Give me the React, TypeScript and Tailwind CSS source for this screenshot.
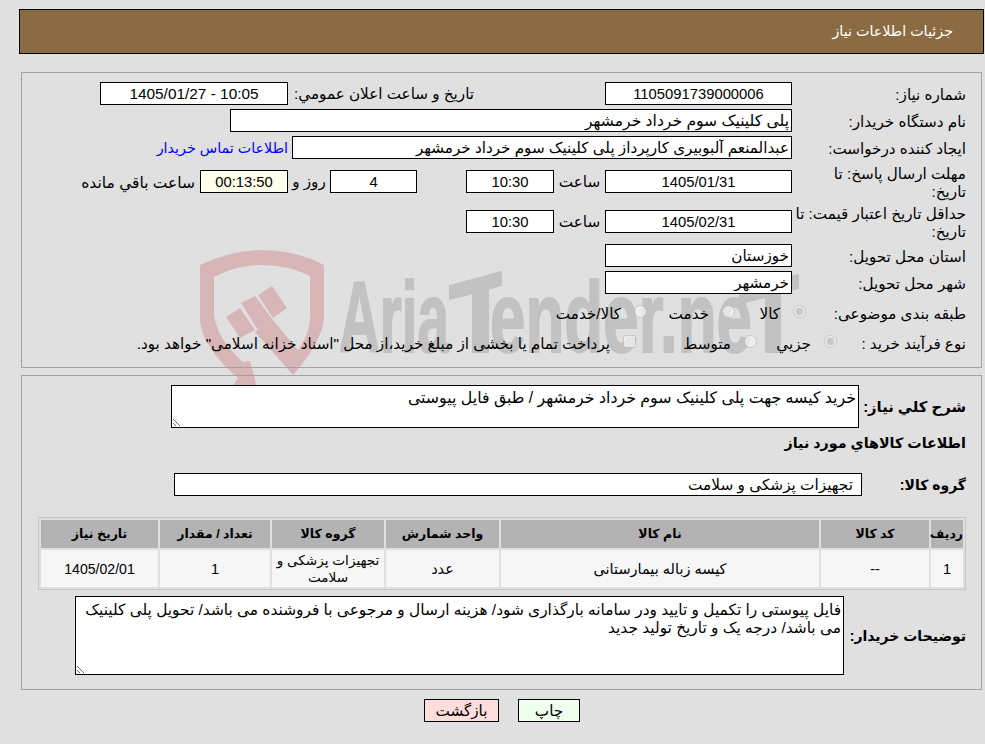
const field = 'h-[23px] border border-black px-[2px] outline-none';
const white = `${field} bg-white`;
const numeric = `${white} text-center text-[14.8px]`;

function Watermark() {
  return (
    <svg className="absolute left-0 top-0 pointer-events-none [direction:ltr]" width="985" height="744" viewBox="0 0 985 744">
      <g fill="#d8b6b7">
        <path d="M200 265 Q232 250 262 250 Q295 250 324 265 L324 318 Q322 342 293 375 L255 332 L273 320 L298 350 Q310 335 310 316 L310 276 Q288 265 262 265 Q236 265 214 277 L214 316 Q218 340 243 362 L250 361 L257 387 L232 387 L238 378 Q205 350 200 323 Z" />
        <path d="M226 317 L240 308 L255 330 L240 338 Z" />
        <path d="M241 303 L255 296 L273 320 L258 330 Z" />
        <path d="M258 295 L272 286 L287 308 L273 318 Z" />
      </g>
      <g fill="#c2c2c2" stroke="#c2c2c2" strokeWidth="2" fontFamily="'Liberation Sans', sans-serif" fontWeight="700">
        <text x="339" y="352" fontSize="100" textLength="110" lengthAdjust="spacingAndGlyphs">Aria</text>
        <path d="M450 286 L501 272 L501 285 L488 289 L488 352 L473 352 L473 293 L450 299 Z" />
        <text x="490" y="352" fontSize="100" textLength="262" lengthAdjust="spacingAndGlyphs">ender.ne</text>
        <path d="M740 290 L798 275 L798 288 L780 293 L780 352 L766 352 L766 297 L740 303 Z" />
      </g>
    </svg>
  );
}

function Row({ label, labelWidth = 'w-[174px]', h, mt, children }: { label: React.ReactNode; labelWidth?: string; h: string; mt: string; children: React.ReactNode }) {
  return (
    <div className={`flex items-center ${h} ${mt}`}>
      <div className={`${labelWidth} shrink-0 pt-[2px] leading-[18px]`}>{label}</div>
      {children}
    </div>
  );
}

function Option({ label, width, checked, type = 'radio' }: { label: string; width: string; checked?: boolean; type?: string }) {
  return (
    <div className={`flex items-center ${width} shrink-0`}>
      <input type={type} disabled defaultChecked={checked} className="w-[13px] h-[13px] m-0 -mt-[4px] shrink-0" />
      <span className="mr-[13px] whitespace-nowrap pt-[2px]">{label}</span>
    </div>
  );
}

const columns = [
  { title: 'ردیف', value: '1', width: 'w-[32px]', cell: 'text-[14.5px]' },
  { title: 'کد کالا', value: '--', width: 'w-[108px]', cell: 'text-[14.5px]' },
  { title: 'نام کالا', value: 'کیسه زباله بیمارستانی', width: 'w-[318px]', cell: 'text-[14.5px]' },
  { title: 'واحد شمارش', value: 'عدد', width: 'w-[113px]', cell: 'text-[14.5px]' },
  { title: 'گروه کالا', value: 'تجهیزات پزشکی و سلامت', width: 'w-[112px]', cell: 'text-[13.6px]' },
  { title: 'تعداد / مقدار', value: '1', width: 'w-[110px]', cell: 'text-[14.5px]' },
  { title: 'تاریخ نیاز', value: '1405/02/01', width: 'w-[117px]', cell: 'text-[14.1px]' },
];

export default function App() {
  return (
    <div dir="rtl" className="relative h-[744px] overflow-hidden bg-[#e0e0e0] pt-[9px] text-[15.2px] text-black font-['Liberation_Sans','DejaVu_Sans',sans-serif]">
      <Watermark />

      <header className="relative ml-[19px] mr-px flex h-[45px] items-center border border-black bg-[#8b6c42] pr-[30px] text-[14.3px] text-white">
        جزئیات اطلاعات نیاز
      </header>

      <section className="relative ml-[21px] mr-[3px] mt-[18px] h-[296px] border border-[#a3a3a3] pr-[15px] pt-[9px]">
        <Row label="شماره نیاز:" h="h-[23px]" mt="mt-0">
          <input readOnly value="1105091739000006" className={`${numeric} w-[187px]`} />
          <div className="mr-[131px] w-[181px] whitespace-nowrap pt-[2px]">تاریخ و ساعت اعلان عمومي:</div>
          <input readOnly value="1405/01/27 - 10:05" dir="ltr" className={`${white} mr-[5px] w-[188px] text-center text-[15.4px]`} />
        </Row>
        <Row label="نام دستگاه خریدار:" h="h-[23px]" mt="mt-[4px]">
          <input readOnly value="پلی کلینیک سوم خرداد خرمشهر" className={`${white} w-[562px] text-[15.6px]`} />
        </Row>
        <Row label="ایجاد کننده درخواست:" h="h-[23px]" mt="mt-[4px]">
          <input readOnly value="عبدالمنعم آلبوبیری کارپرداز پلی کلینیک سوم خرداد خرمشهر" className={`${white} w-[500px]`} />
          <a className="mr-[4px] whitespace-nowrap pt-[2px] text-[14.3px] text-[#0000ff]">اطلاعات تماس خریدار</a>
        </Row>
        <Row label={<>مهلت ارسال پاسخ: تا<br />تاریخ:</>} h="h-[33px]" mt="mt-[6px]">
          <input readOnly value="1405/01/31" className={`${numeric} w-[187px]`} />
          <span className="w-[51px] shrink-0 pt-[2px] text-center">ساعت</span>
          <input readOnly value="10:30" className={`${numeric} w-[88px]`} />
          <input readOnly value="4" className={`${numeric} mr-[49px] w-[87px]`} />
          <span className="w-[42px] shrink-0 pt-[2px] text-center">روز و</span>
          <input readOnly value="00:13:50" className={`${field} w-[88px] bg-[#ffffee] text-center text-[14.8px]`} />
          <span className="mr-[5px] whitespace-nowrap pt-[2px] text-[15.5px]">ساعت باقي مانده</span>
        </Row>
        <Row label="حداقل تاریخ اعتبار قیمت: تا تاریخ:" h="h-[33px]" mt="mt-[7px]">
          <input readOnly value="1405/02/31" className={`${numeric} w-[187px]`} />
          <span className="w-[51px] shrink-0 pt-[2px] text-center">ساعت</span>
          <input readOnly value="10:30" className={`${numeric} w-[88px]`} />
        </Row>
        <Row label="استان محل تحویل:" h="h-[23px]" mt="mt-[6px]">
          <input readOnly value="خوزستان" className={`${white} w-[187px]`} />
        </Row>
        <Row label="شهر محل تحویل:" h="h-[23px]" mt="mt-[4px]">
          <input readOnly value="خرمشهر" className={`${white} w-[187px]`} />
        </Row>
        <Row label="طبقه بندی موضوعی:" labelWidth="w-[160px]" h="h-[24px]" mt="mt-[7px]">
          <Option label="کالا" width="w-[71px]" checked />
          <Option label="خدمت" width="w-[88px]" />
          <Option label="کالا/خدمت" width="w-[100px]" />
        </Row>
        <Row label="نوع فرآیند خرید :" labelWidth="w-[129px]" h="h-[24px]" mt="mt-[6px]">
          <Option label="جزیي" width="w-[80px]" checked />
          <Option label="متوسط" width="w-[121px]" />
          <Option label={'پرداخت تمام یا بخشی از مبلغ خرید،از محل "اسناد خزانه اسلامی" خواهد بود.'} width="w-[500px]" type="checkbox" />
        </Row>
      </section>

      <section className="relative ml-[21px] mr-[3px] mt-[7px] h-[315px] border border-[#a3a3a3] pt-[9px]">
        <div className="flex pr-[15px]">
          <div className="w-[107px] shrink-0 pt-[11px] text-[14.8px] font-bold">شرح کلي نياز:</div>
          <textarea readOnly value="خرید کیسه جهت پلی کلینیک سوم خرداد خرمشهر / طبق فایل پیوستی" className="h-[43px] w-[688px] resize border border-black bg-white px-[2px] pt-[3px] text-[15.8px] leading-[18px] outline-none" />
        </div>
        <div className="mt-[5px] h-[20px] pr-[15px] text-[14.3px] font-bold leading-[20px]">اطلاعات کالاهاي مورد نياز</div>
        <div className="mt-[20px] flex items-center pr-[15px]">
          <div className="w-[104px] shrink-0 pt-[1px] text-[14px] font-bold">گروه کالا:</div>
          <input readOnly value="تجهیزات پزشکی و سلامت" className={`${white} w-[688px] pr-[8px] text-[15.3px]`} />
        </div>

        <table className="mr-[15px] mt-[21px] w-[928px] table-fixed border-separate border-spacing-[2px] border border-[#c6c6c6] text-center">
          <colgroup>
            {columns.map(col => <col key={col.title} className={col.width} />)}
          </colgroup>
          <thead>
            <tr>
              {columns.map(col => (
                <th key={col.title} className="h-[28px] bg-[#b3b3b3] p-0 pt-[1px] text-[12.5px] font-bold">{col.title}</th>
              ))}
            </tr>
          </thead>
          <tbody>
            <tr>
              {columns.map(col => (
                <td key={col.title} className={`h-[37px] bg-[#f6f6f6] p-0 pt-[1px] leading-[17px] ${col.cell}`}>{col.value}</td>
              ))}
            </tr>
          </tbody>
        </table>

        <div className="mt-[6px] flex items-center pr-[15px]">
          <div className="w-[122px] shrink-0 pt-[2px] text-[14px] font-bold">توضیحات خریدار:</div>
          <textarea readOnly value="فایل پیوستی را تکمیل و تایید ودر سامانه بارگذاری شود/ هزینه ارسال و مرجوعی با فروشنده می باشد/ تحویل پلی کلینیک می باشد/ درجه یک و تاریخ تولید جدید" className="h-[79px] w-[769px] resize border border-black bg-white px-[2px] pt-[4px] text-[15.4px] leading-[18px] outline-none" />
        </div>
      </section>

      <div className="relative mt-[9px] flex h-[23px] justify-center gap-[19px] pl-[19px]">
        <button className="w-[62px] border border-black bg-[#eeffee]">چاپ</button>
        <button className="w-[75px] border border-black bg-[#ffdddd]">بازگشت</button>
      </div>
    </div>
  );
}
